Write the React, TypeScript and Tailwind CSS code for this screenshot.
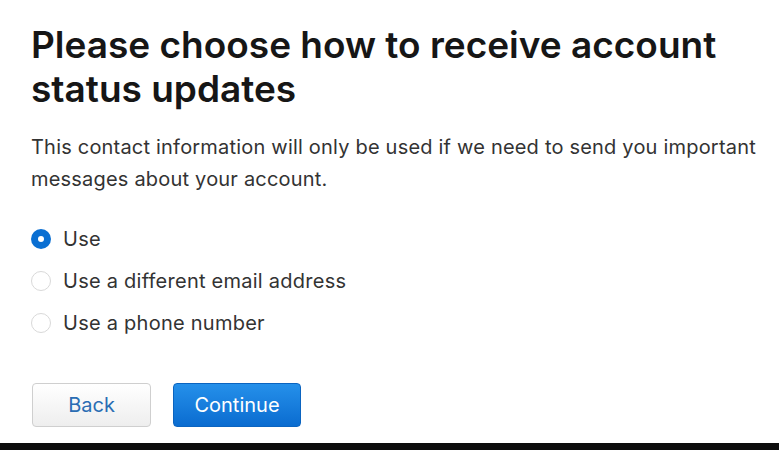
const options = ["Use", "Use a different email address", "Use a phone number"];

function Radio({ checked }: { checked: boolean }) {
  if (checked) {
    return (
      <span className="flex h-[20px] w-[20px] items-center justify-center rounded-full bg-[#0a6fd2]">
        <span className="h-[6px] w-[6px] rounded-full bg-white" />
      </span>
    );
  }
  return <span className="h-[20px] w-[20px] rounded-full border border-[#d9d9d9] bg-white" />;
}

export default function App() {
  return (
    <div className="flex h-[450px] w-[779px] flex-col bg-white font-['Inter',sans-serif]">
      <div className="flex-1 pl-[31px] pt-[23px]">
        <h1 className="text-[37px] font-semibold leading-[44px] text-[#161616]">
          Please choose how to receive account
          <br />
          status updates
        </h1>
        <p className="mt-[20px] text-[20px] leading-[32px] tracking-[0.2px] text-[#333]">
          This contact information will only be used if we need to send you important
          <br />
          messages about your account.
        </p>
        <div className="mt-[23px] flex flex-col">
          {options.map((o, i) => (
            <label key={o} className="flex h-[42px] items-center gap-[12px] text-[20px] tracking-[0.25px] text-[#333]">
              <Radio checked={i === 0} />
              <span>{o}</span>
            </label>
          ))}
        </div>
        <div className="mt-[39px] flex gap-[22px] pl-[1px]">
          <button className="h-[44px] w-[119px] rounded-[4px] border border-[#cfcfcf] bg-gradient-to-b from-white to-[#eeeeee] text-[20px] text-[#2a6db3]">
            Back
          </button>
          <button className="h-[44px] w-[128px] rounded-[4px] border border-[#0b64c0] bg-gradient-to-b from-[#2590ea] to-[#0a6cd0] text-[20px] text-white">
            Continue
          </button>
        </div>
      </div>
      <div className="h-[7px] bg-[#0d0d0d]" />
    </div>
  );
}
